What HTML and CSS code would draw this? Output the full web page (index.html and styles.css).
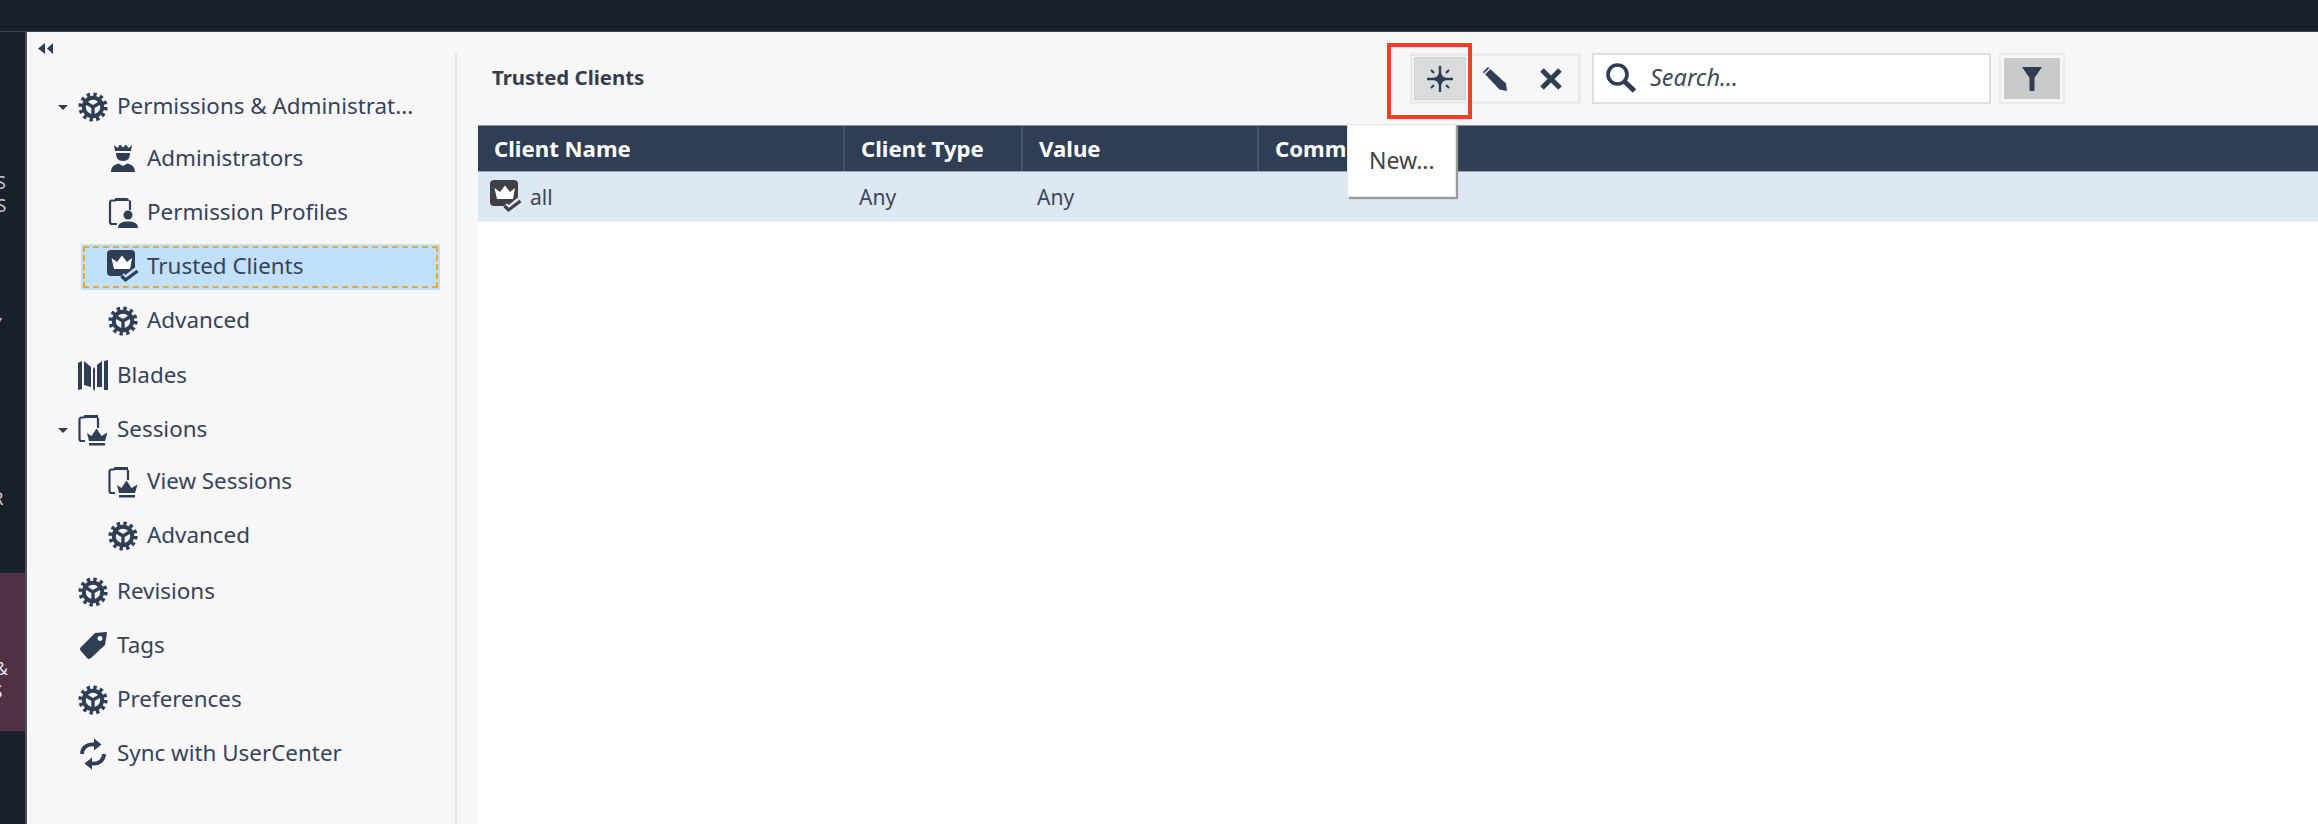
FILE: index.html
```html
<!DOCTYPE html>
<html lang="en">
<head>
<meta charset="utf-8">
<title>Trusted Clients</title>
<link rel="stylesheet" href="styles.css">
</head>
<body>
<svg class="defs" width="0" height="0" aria-hidden="true">
  <symbol id="i-gear" viewBox="0 0 30 30">
    <circle cx="15" cy="15" r="12.6" fill="none" stroke="currentColor" stroke-width="4" stroke-dasharray="3.3 3.3"/>
    <circle cx="15" cy="15" r="9.2" fill="none" stroke="currentColor" stroke-width="4"/>
    <path d="M15 15 L15 24 M15 15 L7.5 10.5 M15 15 L22.5 10.5" fill="none" stroke="currentColor" stroke-width="3.4"/>
  </symbol>
  <symbol id="i-admin" viewBox="0 0 30 30">
    <path d="M6 1 L9.5 4 L12 0.5 L15 3.5 L18 0.5 L20.5 4 L24 1 L23 7 H7 Z M8 9 H22 C22 14 20 17 15 17 C10 17 8 14 8 9 Z M3 28 C3 22 7 20.5 10.5 19.5 L15 22 L19.500 19.500 C23 20.500 27 22 27 28 Z" fill="currentColor"/>
  </symbol>
  <symbol id="i-profile" viewBox="0 0 30 32">
    <path d="M8 3.500 H4 Q2 3.500 2 6 V25 Q2 27 4 27 H9 M7 2 H18 Q20 2 20 4 M22 3.500 Q22 3.500 22 5 V13" fill="none" stroke="currentColor" stroke-width="2.200"/>
    <path d="M7 1 H19 V4 H7 Z" fill="currentColor"/>
    <circle cx="20" cy="18" r="4.500" fill="currentColor"/>
    <path d="M10 31 C10 26 14 24.500 20 24.500 C26 24.500 30 26 30 31 Z" fill="currentColor"/>
  </symbol>
  <symbol id="i-trusted" viewBox="0 0 32 34">
    <rect x="0" y="0" width="28" height="26" rx="4" fill="currentColor"/>
    <path d="M4.500 8 L10 12 L15 5.500 L20 12 L25 8 L23 19 H7 Z" fill="#fff"/>
    <path d="M14 26 L18 30.500 L30 21" fill="none" stroke="var(--halo, #c1e0fb)" stroke-width="8"/>
    <path d="M14.500 26 L18.500 30 L30.500 21" fill="none" stroke="currentColor" stroke-width="3.200"/>
  </symbol>
  <symbol id="i-blades" viewBox="0 0 30 32">
    <path d="M0 3 L4 1 V29 L0 30 Z M6 1 L13 7 V27 L6 25 Z M15 9 L17 7 V31 L15 29 Z M19 5 L24 1 V27 L19 27 Z M26 1 L30 0 V30 L26 30 Z" fill="currentColor"/>
  </symbol>
  <symbol id="i-sessions" viewBox="0 0 30 32">
    <path d="M7 3.500 H3.500 Q1.500 3.500 1.500 6 V25 Q1.500 27 3.500 27 H7 M20 4 V14" fill="none" stroke="currentColor" stroke-width="2.200"/>
    <path d="M6 1 H20 V4 H6 Z" fill="currentColor"/>
    <path d="M9 19 L13.500 22 L18.500 14.500 L23.500 22 L29.500 18.500 L27 27 H11 Z M11 29 H27 V31.500 H11 Z" fill="currentColor"/>
  </symbol>
  <symbol id="i-tag" viewBox="0 0 30 30">
    <path fill-rule="evenodd" d="M17 2 L28 1 Q29 1 29 2 L27 14 L13 27 Q11 29 9 27 L3 20 Q1 18 3 16 Z M22 5 A2.500 2.500 0 1 0 22.010 10 A2.500 2.500 0 1 0 22 5 Z" fill="currentColor"/>
  </symbol>
  <symbol id="i-sync" viewBox="0 0 30 32">
    <path d="M4 16 C4 10 9 6 15 6.500 H19 M26 16 C26 22 21 26 15 25.500 H11" fill="none" stroke="currentColor" stroke-width="3.800"/>
    <path d="M16 0.500 L23.500 6.500 L16 12.500 Z M14 19.500 L6.500 25.500 L14 31.500 Z" fill="currentColor"/>
  </symbol>
</svg>

<header class="topbar"></header>

<div class="app">
  <nav class="rail">
    <div class="rail-inner">
      <div class="rail-label rail-gateways">GATEWAYS<br>&amp; SERVERS</div>
      <div class="rail-label rail-security">SECURITY<br>POLICIES</div>
      <div class="rail-label rail-logs">LOGS &amp;<br>MONITOR</div>
      <div class="rail-label rail-manage">MANAGE &amp;<br>SETTINGS</div>
    </div>
  </nav>

  <section class="panel">
    <aside class="sidebar">
      <svg class="collapse" width="16" height="12" viewBox="0 0 16 12"><path d="M7 0 V11 L0 5.500 Z M15 0 V11 L9 5.500 Z" fill="currentColor"/></svg>
      <div class="tree">
        <div class="row"><i class="caret"></i><svg class="ico"><use href="#i-gear"/></svg><span>Permissions &amp; Administrat...</span></div>
        <div class="children tight">
          <div class="row child"><svg class="ico"><use href="#i-admin"/></svg><span>Administrators</span></div>
          <div class="row child"><svg class="ico"><use href="#i-profile"/></svg><span>Permission Profiles</span></div>
          <div class="row child selected"><svg class="ico"><use href="#i-trusted"/></svg><span>Trusted Clients</span></div>
          <div class="row child"><svg class="ico"><use href="#i-gear"/></svg><span>Advanced</span></div>
        </div>
        <div class="row"><i class="caret none"></i><svg class="ico"><use href="#i-blades"/></svg><span>Blades</span></div>
        <div class="row"><i class="caret"></i><svg class="ico"><use href="#i-sessions"/></svg><span>Sessions</span></div>
        <div class="children">
          <div class="row child"><svg class="ico"><use href="#i-sessions"/></svg><span>View Sessions</span></div>
          <div class="row child"><svg class="ico"><use href="#i-gear"/></svg><span>Advanced</span></div>
        </div>
        <div class="row"><i class="caret none"></i><svg class="ico"><use href="#i-gear"/></svg><span>Revisions</span></div>
        <div class="row"><i class="caret none"></i><svg class="ico"><use href="#i-tag"/></svg><span>Tags</span></div>
        <div class="row"><i class="caret none"></i><svg class="ico"><use href="#i-gear"/></svg><span>Preferences</span></div>
        <div class="row"><i class="caret none"></i><svg class="ico"><use href="#i-sync"/></svg><span>Sync with UserCenter</span></div>
      </div>
    </aside>
    <div class="divider"></div>

    <main class="content">
      <div class="toolbar">
        <h1 class="title">Trusted Clients</h1>
        <div class="btn-group">
          <button class="tool active" type="button">
            <svg width="28" height="28" viewBox="0 0 28 28" class="tool-ico"><path d="M14 1 V27 M1 14 H27" stroke="currentColor" stroke-width="2.400"/><path d="M14 6.500 L16.800 11.200 L21.500 14 L16.800 16.800 L14 21.500 L11.200 16.800 L6.500 14 L11.200 11.200 Z" fill="currentColor"/><path d="M5 5 L8 8 M23 5 L20 8 M5 23 L8 20 M23 23 L20 20" stroke="currentColor" stroke-width="2"/></svg>
          </button>
          <button class="tool pencil" type="button">
            <svg width="24" height="24" viewBox="0 0 24 24" class="tool-ico"><path d="M5 0 L23 16.500 L24 24 L16.500 22.500 L0 5 Z" fill="currentColor"/><path d="M1.500 7 L7 1.500" stroke="#f7f7f7" stroke-width="1.500"/></svg>
          </button>
          <button class="tool" type="button">
            <svg width="24" height="24" viewBox="0 0 24 24" class="tool-ico"><path d="M3 3 L21 21 M21 3 L3 21" stroke="currentColor" stroke-width="5"/></svg>
          </button>
        </div>
        <div class="search">
          <svg width="32" height="32" viewBox="0 0 32 32" class="search-ico"><circle cx="12.500" cy="12.500" r="9.500" fill="none" stroke="currentColor" stroke-width="3.600"/><path d="M19.500 19.500 L29.500 29" stroke="currentColor" stroke-width="5"/></svg>
          <span class="search-text">Search...</span>
        </div>
        <div class="filter">
          <span class="filter-btn">
            <svg width="20" height="24" viewBox="0 0 20 24" class="tool-ico"><path d="M0 0 H20 L12.500 11 V24 H7.500 V11 Z" fill="currentColor"/></svg>
          </span>
        </div>
        <div class="highlight"></div>
        <div class="popup">New...</div>
      </div>

      <div class="grid grid-head">
        <div class="cell">Client Name</div>
        <div class="cell">Client Type</div>
        <div class="cell">Value</div>
        <div class="cell">Comments</div>
      </div>
      <div class="grid grid-row">
        <div class="cell name-cell"><svg class="row-ico"><use href="#i-trusted"/></svg><span>all</span></div>
        <div class="cell">Any</div>
        <div class="cell">Any</div>
        <div class="cell"></div>
      </div>
    </main>
  </section>
</div>
</body>
</html>
```

FILE: styles.css
```css
* { box-sizing: border-box; }

html, body {
  margin: 0;
  height: 100%;
  overflow: hidden;
}

body {
  display: flex;
  flex-direction: column;
  background: #1a202d;
  font-family: "Noto Sans", "Open Sans", sans-serif;
  font-size: 20px;
  color: #36425a;
}

.defs { position: absolute; }

.topbar {
  height: 32px;
  flex: none;
  background: #1a202d;
  border-bottom: 1px solid #3b4150;
}

.app {
  flex: 1;
  display: flex;
  min-height: 0;
}

/* left rail, mostly hidden behind the panel */
.rail {
  width: 27px;
  flex: none;
  overflow: hidden;
  border-right: 2px solid #4a4f5a;
}

.rail-inner {
  width: 200px;
  margin-left: -139px;
  display: flex;
  flex-direction: column;
}

.rail-label {
  text-align: center;
  white-space: nowrap;
  font-size: 18px;
  line-height: 23px;
  color: #c3c8d0;
}

.rail-gateways { margin-top: 139px; }
.rail-security { margin-top: 96px; }
.rail-logs { margin-top: 105px; }

.rail-manage {
  margin-top: 63px;
  height: 158px;
  padding-top: 84px;
  color: #e9e4e8;
  background: #4f3044;
}

/* panel */
.panel {
  flex: 1;
  min-width: 0;
  display: flex;
  background: #f7f7f7;
}

.sidebar {
  width: 428px;
  flex: none;
  padding-top: 11px;
}

.collapse {
  display: block;
  margin-left: 11px;
  color: #2f3e55;
}

.tree {
  margin-top: 25px;
  display: flex;
  flex-direction: column;
}

.row {
  display: flex;
  align-items: center;
  height: 54px;
  padding-left: 31px;
  white-space: nowrap;
  font-size: 22.4px;
  line-height: 30px;
}

.row span { position: relative; top: -1px; }

.caret {
  width: 20px;
  flex: none;
  height: 0;
}

.caret::before {
  content: "";
  display: block;
  width: 0;
  height: 0;
  margin-top: -2px;
  border-left: 5px solid transparent;
  border-right: 5px solid transparent;
  border-top: 5px solid #2f3e55;
}

.caret.none::before { display: none; }

.ico {
  width: 30px;
  height: 32px;
  flex: none;
  margin-right: 9px;
  color: #2f3e55;
}

.children {
  margin-top: -2px;
  margin-bottom: 2px;
}

.children.tight { margin-bottom: 1px; }

.child {
  margin-left: 54px;
  margin-right: 15px;
  padding-left: 27px;
}

.selected {
  position: relative;
  height: 46px;
  margin-top: 4px;
  margin-bottom: 4px;
  background: #c1e0fb;
  --halo: #c1e0fb;
}

.selected::after {
  content: "";
  position: absolute;
  inset: 2px;
  border: 2px dashed #f5a623;
}

.selected .ico {
  width: 32px;
  height: 34px;
  margin-left: -1px;
  margin-right: 8px;
}

.divider {
  width: 2px;
  flex: none;
  margin-top: 20px;
  background: #e4e6ea;
}

.content {
  flex: 1;
  min-width: 0;
  margin-left: 21px;
  background: #fff;
  display: flex;
  flex-direction: column;
}

.toolbar {
  position: relative;
  height: 93px;
  flex: none;
  margin-left: -21px;
  padding-left: 35px;
  padding-right: 253px;
  display: flex;
  align-items: center;
  background: #f7f7f7;
}

.title {
  flex: 1;
  margin: 0 0 4px;
  font-size: 20.4px;
  font-weight: 700;
  color: #333d4d;
}

.btn-group {
  display: flex;
  flex: none;
  width: 171px;
  height: 51px;
  padding: 1px;
  border: 3px solid #e8eaed;
  margin-right: 11px;
}

.tool {
  flex: 1;
  border: 0;
  padding: 0;
  background: transparent;
  display: flex;
  align-items: center;
  justify-content: center;
  color: #2f3e55;
}

.tool:last-child { padding-left: 5px; }
.tool.pencil { padding-left: 3px; }

.tool.active {
  flex: none;
  width: 52px;
  background: #dadbdc;
  border: 1px solid #cfd0d2;
}

.tool-ico { display: block; }

.search {
  flex: none;
  width: 399px;
  height: 51px;
  margin-right: 8px;
  padding-left: 11px;
  display: flex;
  align-items: center;
  background: #fff;
  border: 2px solid #dcdee1;
}

.search-ico {
  flex: none;
  margin-right: 13px;
  margin-bottom: 2px;
  color: #2f3e55;
}

.search-text {
  margin-bottom: 3px;
  font-style: italic;
  font-size: 23.5px;
  color: #40495a;
}

.filter {
  flex: none;
  width: 66px;
  height: 51px;
  padding: 3px;
  border: 2px solid #e8eaed;
}

.filter-btn {
  display: flex;
  align-items: center;
  justify-content: center;
  height: 100%;
  background: #c9cacc;
  color: #2f3e55;
}

/* annotation and flyout lying over the toolbar and table */
.highlight {
  position: absolute;
  left: 930px;
  top: 11px;
  width: 85px;
  height: 76px;
  border: 4px solid #ee4022;
}

.popup {
  position: absolute;
  left: 890px;
  top: 92px;
  width: 109px;
  height: 73px;
  z-index: 2;
  padding: 21px 0 0 21px;
  font-size: 23px;
  line-height: 28px;
  color: #444;
  background: #fff;
  border: 1px solid #e6e6e6;
  box-shadow: 2px 2px 1px #9a9a9a;
}

/* table */
.grid {
  display: grid;
  grid-template-columns: 367px 178px 236px 1fr;
  flex: none;
}

.grid-head {
  height: 47px;
  background: #2f3e55;
  color: #fff;
  font-weight: 700;
  font-size: 22.2px;
  border-top: 1px solid #8a93a1;
  border-bottom: 1px solid #9aa2ae;
}

.grid-head .cell {
  padding-left: 16px;
  border-right: 2px solid #445269;
}

.grid-head .cell:last-child { border-right: 0; }

.grid-row {
  height: 50px;
  background: #dce8f4;
  font-size: 21px;
  color: #3f4654;
  border-bottom: 1px solid #e6eef6;
}

.cell {
  display: flex;
  align-items: center;
  padding-left: 14px;
  white-space: nowrap;
}

.name-cell { padding-left: 12px; }

.row-ico {
  width: 32px;
  height: 34px;
  margin-right: 8px;
  color: #3f4045;
  --halo: #dce8f4;
}
```
